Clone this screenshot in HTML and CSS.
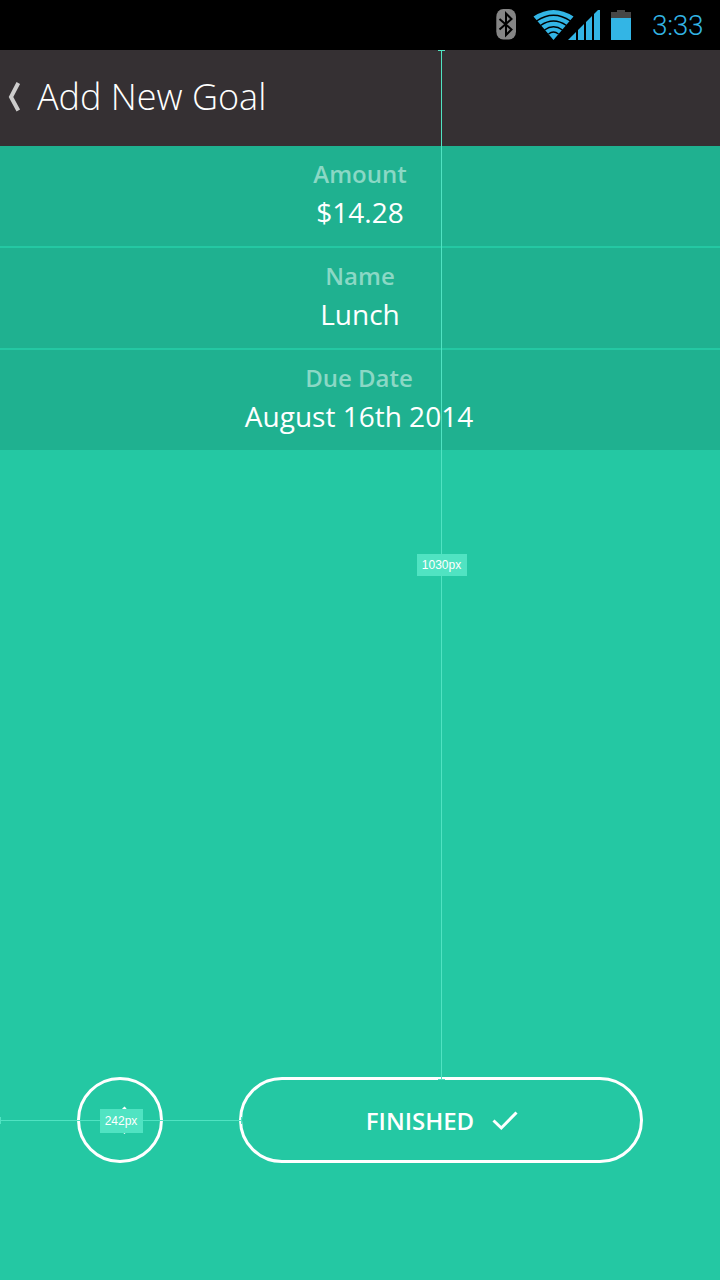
FILE: index.html
```html
<!DOCTYPE html>
<html lang="en">
<head>
<meta charset="utf-8">
<title>Add New Goal</title>
<link rel="stylesheet" href="styles.css">
</head>
<body>
<div class="screen">
  <div class="status-bar">
    <svg class="status-icons" width="140" height="50" viewBox="492 0 140 50">
      <rect x="496.3" y="9" width="19.7" height="30.5" rx="7" ry="8" fill="#858585"/>
      <path d="M499.500 19 L511.500 29.500 L506 35 V13.500 L511.500 19 L499.500 29.500" fill="none" stroke="#000" stroke-width="2"/>
      <path d="M553.500 40 L533.500 16.500 Q553.500 3.500 573.500 16.500 Z" fill="#33b5e5"/>
      <g fill="none" stroke="#000" stroke-width="1.5">
        <path d="M536.500 21 Q553.500 9.500 570.500 21"/>
        <path d="M540.500 25.500 Q553.500 16.500 566.500 25.500"/>
        <path d="M544.500 30 Q553.500 23.500 562.500 30"/>
        <path d="M548.500 34 Q553.500 30 558.500 34"/>
      </g>
      <path d="M568 40 L576 32 V40 Z M578 40 V30 L584 24 V40 Z M586 40 V22 L592 16 V40 Z M594 40 V14 L598 10 H600 V40 Z" fill="#33b5e5"/>
      <path d="M611 12 H617 V10 H625 V12 H631 V18 H611 Z" fill="#464646"/>
      <rect x="611" y="18" width="20" height="22" fill="#33b5e5"/>
    </svg>
    <span class="clock">3:33</span>
  </div>
  <header class="title-bar">
    <svg class="back" width="14" height="32" viewBox="8 81 14 32"><path d="M18.300 83 L11 97 L18.300 110.500" fill="none" stroke="#cdcccc" stroke-width="4"/></svg>
    <h1 class="title">Add New Goal</h1>
  </header>
  <main class="fields">
    <section class="field"><span class="label">Amount</span><span class="value">$14.28</span></section>
    <section class="field"><span class="label">Name</span><span class="value">Lunch</span></section>
    <section class="field field-date"><span class="label">Due Date</span><span class="value">August 16th 2014</span></section>
  </main>
  <footer class="actions">
    <button class="round" aria-label="Previous"><svg width="28" height="28" viewBox="0 0 28 28"><path d="M19.500 1.500 L7 14.200 L19.500 27" fill="none" stroke="#fff" stroke-width="3"/></svg></button>
    <button class="finish"><span>FINISHED</span><svg width="26" height="20" viewBox="492 1112 26 20"><path d="M493.500 1121.500 L501.300 1129 L516.500 1113.500" fill="none" stroke="#fff" stroke-width="3"/></svg></button>
  </footer>
  <div class="guide guide-v"><span class="measure">1030px</span></div>
  <div class="guide guide-h"><span class="measure">242px</span></div>
</div>
</body>
</html>
```
FILE: styles.css
```css
* { box-sizing: border-box; }
body { margin: 0; font-family: "Open Sans", "Noto Sans", sans-serif; }
.screen {
  position: relative;
  display: flex;
  flex-direction: column;
  width: 720px;
  height: 1280px;
  overflow: hidden;
  background: #24c8a3;
  color: #fff;
}
.status-bar {
  display: flex;
  align-items: center;
  justify-content: flex-end;
  height: 50px;
  padding-right: 16px;
  background: #000;
}
.status-icons { margin-right: 20px; }
.clock {
  width: 52px;
  padding-top: 1px;
  font: 300 28px/50px Roboto, sans-serif;
  letter-spacing: -0.3px;
  color: #33b5e5;
  white-space: nowrap;
}
.title-bar {
  display: flex;
  align-items: center;
  gap: 15px;
  height: 96px;
  padding: 0 0 2px 8px;
  background: #353033;
}
.title {
  margin: 0;
  font-size: 36px;
  font-weight: 300;
  line-height: 48px;
}
.fields { display: flex; flex-direction: column; gap: 2px; }
.field {
  display: flex;
  flex-direction: column;
  align-items: center;
  height: 100px;
  padding-top: 10px;
  background: #1fb190;
}
.field-date { padding-right: 2px; }
.label {
  font-size: 24px;
  font-weight: 600;
  line-height: 36px;
  color: #8bd8c5;
}
.value { font-size: 28px; line-height: 40px; }
.actions {
  display: flex;
  gap: 76px;
  margin-top: auto;
  padding: 0 77px 117px;
}
.round, .finish {
  display: flex;
  align-items: center;
  justify-content: center;
  height: 86px;
  padding: 0;
  border: 3px solid #fff;
  border-radius: 43px;
  background: none;
  color: #fff;
}
.round { width: 86px; }
.finish {
  flex: 1;
  gap: 18px;
  padding: 2px 0 0 2px;
  font: 600 24px/36px "Open Sans", sans-serif;
}
.guide {
  position: absolute;
  display: flex;
  align-items: center;
  justify-content: center;
  border: 0 solid #50e3c2;
}
.guide-v {
  left: 438px;
  top: 50px;
  width: 7px;
  height: 1030px;
  border-width: 1px 0;
  background: linear-gradient(#50e3c2, #50e3c2) center / 1px 100% no-repeat;
}
.guide-h {
  left: 0;
  top: 1117px;
  width: 242px;
  height: 7px;
  border-width: 0 1px;
  background: linear-gradient(#50e3c2, #50e3c2) center / 100% 1px no-repeat;
}
.measure {
  flex: none;
  width: 50px;
  height: 22px;
  background: #50e3c2;
  font: 12px/22px "Liberation Sans", sans-serif;
  text-align: center;
}
.guide-h .measure { width: 43px; height: 24px; line-height: 24px; }
```
